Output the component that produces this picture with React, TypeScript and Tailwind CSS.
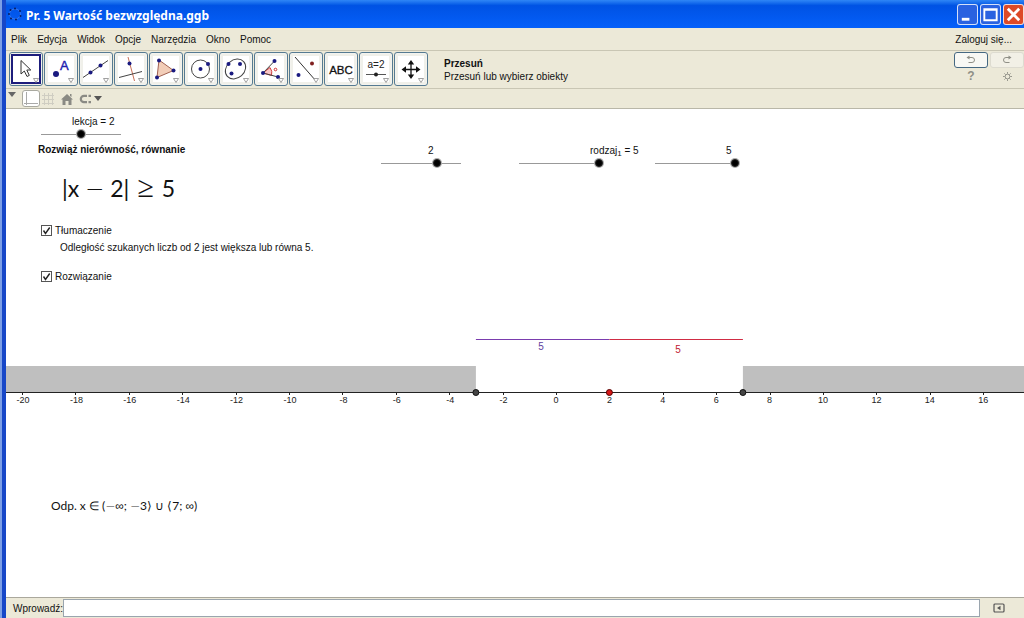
import { useState, type ReactNode } from "react"

interface Tool {
  name: string
  icon: ReactNode
}

interface SliderProps {
  id: string
  label: ReactNode
  min: number
  max: number
  initial: number
  labelClass: string
  className: string
}

interface CheckProps {
  label: string
  checked: boolean
  onChange: (checked: boolean) => void
  className: string
}

const NAVY = "#1a1a80"

const Dot = ({ x, y, fill = NAVY, r = 2 }: { x: number; y: number; fill?: string; r?: number }) => (
  <circle cx={x} cy={y} r={r} fill={fill} />
)

const tools: Tool[] = [
  {
    name: "Przesuń",
    icon: (
      <path
        d="M9 5.5 V19 L12.3 16 L15 21.5 L17.3 20.4 L14.8 15 H18.8 Z"
        fill="#fff"
        stroke="#333"
        strokeWidth="1"
      />
    ),
  },
  {
    name: "Punkt",
    icon: (
      <>
        <Dot x={9} y={19} r={3} />
        <text x="13" y="14.5" fontSize="13" fill="#2020b0" stroke="#2020b0" strokeWidth="0.4">
          A
        </text>
      </>
    ),
  },
  {
    name: "Prosta",
    icon: (
      <>
        <path d="M1 22.5 L26 5.5" stroke="#444" fill="none" />
        <Dot x={8.5} y={17.5} />
        <Dot x={18.5} y={10.5} />
      </>
    ),
  },
  {
    name: "Prosta prostopadła",
    icon: (
      <>
        <path d="M11 2 L17.5 26" stroke="#c87058" fill="none" />
        <path d="M2 22.5 L25 16.5" stroke="#444" fill="none" />
        <Dot x={12.5} y={8.5} />
      </>
    ),
  },
  {
    name: "Wielokąt",
    icon: (
      <>
        <path d="M7 5 L21.5 15.5 L5 22.5 Z" fill="#f2cdb8" stroke="#a06050" />
        <Dot x={7} y={5.5} />
        <Dot x={21.5} y={15.5} />
        <Dot x={5} y={22.5} />
      </>
    ),
  },
  {
    name: "Okrąg",
    icon: (
      <>
        <circle cx="13.5" cy="14" r="9" fill="none" stroke="#444" />
        <Dot x={13.5} y={14} />
        <Dot x={21} y={9} />
      </>
    ),
  },
  {
    name: "Elipsa",
    icon: (
      <>
        <ellipse cx="13.5" cy="14" rx="11" ry="9" transform="rotate(-42 13.5 14)" fill="none" stroke="#444" />
        <Dot x={6.5} y={9} />
        <Dot x={18} y={9} />
        <Dot x={9.5} y={18.5} />
      </>
    ),
  },
  {
    name: "Kąt",
    icon: (
      <>
        <path d="M6 18 L13 12.5 A9 9 0 0 1 14.5 20.5 Z" fill="#f9c6c6" stroke="#d04040" />
        <path d="M17.5 6 L6 18 L21 22" stroke="#444" fill="none" />
        <Dot x={17.5} y={6} />
        <Dot x={6} y={18} />
        <Dot x={21} y={22} />
        <circle cx="18.5" cy="14.5" r="1.3" fill="none" stroke="#d03030" />
      </>
    ),
  },
  {
    name: "Symetria osiowa",
    icon: (
      <>
        <path d="M3 2 L24 26" stroke="#333" fill="none" />
        <Dot x={20} y={8.5} fill="#802020" />
        <Dot x={6.5} y={20} />
      </>
    ),
  },
  {
    name: "Tekst",
    icon: (
      <text x="14" y="18.5" textAnchor="middle" fontSize="11.5" fill="#111" stroke="#111" strokeWidth="0.3">
        ABC
      </text>
    ),
  },
  {
    name: "Suwak",
    icon: (
      <>
        <text x="14" y="13" textAnchor="middle" fontSize="10" fill="#222">
          a=2
        </text>
        <path d="M4 19.5 H24" stroke="#555" />
        <Dot x={14} y={19.5} fill="#222" />
      </>
    ),
  },
  {
    name: "Przesuń obszar",
    icon: (
      <>
        <path d="M14 8 V21 M7.5 14.5 H20.5" stroke="#111" strokeWidth="1.3" />
        <path
          d="M14 5 L17.2 9.5 H10.8 Z M14 24 L17.2 19.5 H10.8 Z M4.5 14.5 L9 11.3 V17.7 Z M23.5 14.5 L19 11.3 V17.7 Z"
          fill="#111"
        />
      </>
    ),
  },
]

const menus = ["Plik", "Edycja", "Widok", "Opcje", "Narzędzia", "Okno", "Pomoc"]

const WindowButton = ({ name, className, children }: { name: string; className: string; children: ReactNode }) => (
  <button
    type="button"
    aria-label={name}
    className={`flex size-[21px] items-center justify-center rounded-[3px] border border-white/80 ${className}`}
  >
    <svg viewBox="0 0 20 20" className="size-full" fill="none" stroke="#fff">
      {children}
    </svg>
  </button>
)

const TitleBar = () => (
  <header className="flex h-7 shrink-0 items-center bg-linear-to-b from-[#2f86f6] via-[#0052e4] via-20% to-[#0560fa] pl-[2px]">
    <svg viewBox="0 0 14 14" className="size-[14px]" fill="#071c60">
      <ellipse cx="7" cy="7" rx="5.5" ry="5" fill="none" stroke="#5d8ff0" strokeWidth="0.6" />
      <circle cx="7" cy="1.5" r="1" />
      <circle cx="12" cy="4" r="1" />
      <circle cx="12.5" cy="9" r="1" />
      <circle cx="8" cy="12.5" r="1" />
      <circle cx="3" cy="11.5" r="1" />
      <circle cx="1" cy="7" r="1" />
      <circle cx="2.5" cy="3" r="1" />
    </svg>
    <h1 className="ml-1 flex-1 pt-1 font-['Noto_Sans',sans-serif] text-[12px] font-bold text-white">
      Pr. 5 Wartość bezwzględna.ggb
    </h1>
    <div className="flex gap-[2px]">
      <WindowButton name="Minimalizuj" className="bg-[#2a62e0]">
        <path d="M4 15 H12" strokeWidth="3" />
      </WindowButton>
      <WindowButton name="Maksymalizuj" className="bg-[#2a62e0]">
        <path d="M3.5 4.5 H16.5 V16 H3.5 Z M3 5 H17" strokeWidth="2" />
      </WindowButton>
      <WindowButton name="Zamknij" className="bg-[#dd4a28]">
        <path d="M4 4 L16 16 M16 4 L4 16" strokeWidth="3" />
      </WindowButton>
    </div>
  </header>
)

const ToolBar = () => {
  const [active, setActive] = useState(0)

  return (
    <div className="flex h-[39px] shrink-0 items-start border-y border-[#c9c6b4] pt-px pl-[3px]">
      <div className="flex gap-px">
        {tools.map((tool, i) => (
          <button
            key={tool.name}
            type="button"
            title={tool.name}
            onClick={() => setActive(i)}
            className="size-[34px] rounded-[3px] border border-[#557a92] bg-[#f3f3ee] p-px"
          >
            <span
              className={`flex size-full items-center justify-center bg-white ${
                i === active ? "border-2 border-[#1d1d7c]" : "border-2 border-[#f0f0ea]"
              }`}
            >
              <svg viewBox="0 0 28 28" className="size-7 shrink-0 font-['Liberation_Sans',sans-serif]">
                {tool.icon}
                <path d="M21.5 23.5 H26.5 L24 27.5 Z" fill="#fff" stroke="#888" strokeWidth="0.8" />
              </svg>
            </span>
          </button>
        ))}
      </div>
      <div className="ml-4 flex-1 self-center leading-[13px]">
        <p className="font-bold">Przesuń</p>
        <p>Przesuń lub wybierz obiekty</p>
      </div>
      <div className="grid grid-cols-2 gap-x-[2px] text-[#8f8f86]">
        <button
          type="button"
          aria-label="Cofnij"
          className="flex h-4 w-[34px] items-center justify-center rounded-[3px] border border-[#456882] bg-[#f8f8f4]"
        >
          <svg viewBox="0 0 10 10" className="size-[10px]" fill="none" stroke="currentColor">
            <path d="M1.5 2.5 H6 A2.5 2.5 0 0 1 6 7.5 H2.5" />
            <path d="M3.5 0.5 L0.5 2.5 L3.5 4.5 Z" fill="currentColor" stroke="none" />
          </svg>
        </button>
        <button
          type="button"
          aria-label="Ponów"
          className="flex h-4 w-[34px] items-center justify-center rounded-[3px] border border-[#dddbd0] bg-[#f2f0e6]"
        >
          <svg viewBox="0 0 10 10" className="size-[10px]" fill="none" stroke="currentColor">
            <path d="M8.5 2.5 H4 A2.5 2.5 0 0 0 4 7.5 H7.5" />
            <path d="M6.5 0.5 L9.5 2.5 L6.5 4.5 Z" fill="currentColor" stroke="none" />
          </svg>
        </button>
        <button type="button" className="h-4 w-[34px] text-[12px] leading-4 font-bold">
          ?
        </button>
        <button type="button" aria-label="Ustawienia" className="flex h-4 w-[34px] items-center justify-center">
          <svg viewBox="0 0 10 10" className="size-[9px]" fill="none" stroke="currentColor">
            <circle cx="5" cy="5" r="2.6" />
            <path d="M5 0 V2 M5 8 V10 M0 5 H2 M8 5 H10 M1.5 1.5 L3 3 M7 7 L8.5 8.5 M8.5 1.5 L7 3 M3 7 L1.5 8.5" />
          </svg>
        </button>
      </div>
    </div>
  )
}

const StyleBar = () => (
  <div className="flex h-5 shrink-0 items-center border-b border-[#b9b7a8] pl-[2px] text-[#8a8a84]">
    <svg viewBox="0 0 8 5" className="mb-2 h-[5px] w-2" fill="#666">
      <path d="M0 0 H8 L4 5 Z" />
    </svg>
    <button
      type="button"
      aria-label="Osie"
      className="ml-[6px] flex h-[17px] w-[18px] items-center justify-center rounded-[3px] border border-[#a9a9a0] bg-white"
    >
      <svg viewBox="0 0 14 14" className="size-[14px]" fill="none" stroke="#aaa">
        <path d="M2.5 0 V13 M0 11.5 H14" />
      </svg>
    </button>
    <button type="button" aria-label="Siatka" className="ml-[2px]">
      <svg viewBox="0 0 12 12" className="size-3" fill="none" stroke="#cfcdc2">
        <path d="M2.5 0 V12 M6.5 0 V12 M10.5 0 V12 M0 2.5 H12 M0 6.5 H12 M0 10.5 H12" />
      </svg>
    </button>
    <button type="button" aria-label="Widok standardowy" className="ml-[7px]">
      <svg viewBox="0 0 12 12" className="size-3" fill="currentColor">
        <path d="M6 1 L12 6.5 H10.5 V12 H7.5 V8 H4.5 V12 H1.5 V6.5 H0 Z M9 1 H10.5 V4 L9 3 Z" />
      </svg>
    </button>
    <button type="button" aria-label="Przyciąganie" className="ml-[6px] flex items-center gap-[2px]">
      <svg viewBox="0 0 13 10" className="h-[10px] w-[13px]" fill="none" stroke="currentColor" strokeWidth="2.2">
        <path d="M8 1.8 H5 A3.2 3.2 0 0 0 5 8.2 H8" />
        <path d="M9.5 1.8 H12 M9.5 8.2 H12" />
      </svg>
      <svg viewBox="0 0 8 5" className="h-[5px] w-2" fill="#555">
        <path d="M0 0 H8 L4 5 Z" />
      </svg>
    </button>
  </div>
)

const Slider = ({ id, label, min, max, initial, labelClass, className }: SliderProps) => {
  const [value, setValue] = useState(initial)

  return (
    <div className={`absolute w-[88px] ${className}`}>
      <label htmlFor={id} className={`block leading-3 whitespace-nowrap ${labelClass}`}>
        {label}
        {value}
      </label>
      <div className="relative flex h-3 items-center">
        <span className="absolute inset-x-1 top-[6px] h-px bg-[#999]" />
        <input
          id={id}
          type="range"
          min={min}
          max={max}
          value={value}
          onChange={(e) => setValue(Number(e.target.value))}
          className="relative h-3 w-full appearance-none bg-transparent [&::-webkit-slider-thumb]:size-2 [&::-webkit-slider-thumb]:appearance-none [&::-webkit-slider-thumb]:rounded-full [&::-webkit-slider-thumb]:border [&::-webkit-slider-thumb]:border-[#222] [&::-webkit-slider-thumb]:bg-black [&::-webkit-slider-thumb]:shadow-[0_0_0_1px_#aaa]"
        />
      </div>
    </div>
  )
}

const Check = ({ label, checked, onChange, className }: CheckProps) => (
  <label className={`absolute flex items-center gap-[3px] leading-[13px] ${className}`}>
    <span className="relative flex size-[11px]">
      <input
        type="checkbox"
        checked={checked}
        onChange={(e) => onChange(e.target.checked)}
        className="peer size-[11px] appearance-none border border-[#555] bg-white"
      />
      <svg
        viewBox="0 0 11 11"
        className="pointer-events-none absolute inset-0 hidden peer-checked:block"
        fill="none"
        stroke="#222"
        strokeWidth="1.4"
      >
        <path d="M2.5 5.5 L4.5 8.5 L8.7 2.5" />
      </svg>
    </span>
    {label}
  </label>
)

// Math signs are wider than the letters around them
const Sign = ({ children }: { children: ReactNode }) => (
  <span className="font-['DejaVu_Sans',sans-serif] font-extralight">{children}</span>
)

// Number line: 0 sits at ORIGIN px, one unit is UNIT px wide
const ORIGIN = 550
const UNIT = 26.7
const AXIS_Y = 283
const toX = (v: number) => ORIGIN + v * UNIT
const ticks = Array.from({ length: 19 }, (_, i) => -20 + i * 2)

const NumberLine = () => (
  <svg className="absolute inset-0 h-full w-full font-['Liberation_Sans',sans-serif]">
    <rect x="0" y={AXIS_Y - 26} width={toX(-3)} height="26" fill="#bfbfbf" />
    <rect x={toX(7)} y={AXIS_Y - 26} width="100%" height="26" fill="#bfbfbf" />
    <rect x={toX(-3)} y="230" width={5 * UNIT} height="1" fill="#7a3cae" />
    <rect x={toX(2)} y="230" width={5 * UNIT} height="1" fill="#d02c44" />
    <text x="535" y="241" textAnchor="middle" fontSize="10" fill="#6040a0">
      5
    </text>
    <text x="672" y="244" textAnchor="middle" fontSize="10" fill="#c02030">
      5
    </text>
    <line x1="0" x2="100%" y1={AXIS_Y + 0.5} y2={AXIS_Y + 0.5} stroke="#222" />
    {ticks.map((v) => (
      <g key={v}>
        <path d={`M${Math.round(toX(v)) + 0.5} ${AXIS_Y} v3`} stroke="#222" />
        <text x={toX(v) + (v < 0 ? 1 : 0)} y={AXIS_Y + 11} textAnchor="middle" fontSize="9" fill="#222">
          {v}
        </text>
      </g>
    ))}
    <circle cx={toX(-3)} cy={AXIS_Y + 0.5} r="3" fill="#444" stroke="#111" />
    <circle cx={toX(7)} cy={AXIS_Y + 0.5} r="3" fill="#444" stroke="#111" />
    <circle cx={toX(2)} cy={AXIS_Y + 0.5} r="3" fill="#d81818" stroke="#500" />
  </svg>
)

const GraphicsView = () => {
  const [explanation, setExplanation] = useState(true)
  const [solution, setSolution] = useState(true)

  return (
    <main className="relative min-h-0 flex-1 overflow-hidden bg-white">
      {solution && <NumberLine />}
      <Slider
        id="lekcja"
        label="lekcja = "
        min={1}
        max={3}
        initial={2}
        labelClass="pl-[35px]"
        className="top-[7px] left-[31px]"
      />
      <Slider id="a" label="" min={-5} max={5} initial={2} labelClass="pl-[51px]" className="top-[36px] left-[371px]" />
      <Slider
        id="rodzaj"
        label={
          <>
            rodzaj<sub className="text-[8px]">1</sub> ={" "}
          </>
        }
        min={1}
        max={5}
        initial={5}
        labelClass="pl-[75px]"
        className="top-[36px] left-[509px]"
      />
      <Slider id="b" label="" min={0} max={5} initial={5} labelClass="pl-[75px]" className="top-[36px] left-[645px]" />
      <h2 className="absolute top-[35px] left-8 leading-3 font-bold">Rozwiąż nierówność, równanie</h2>
      <p className="absolute top-[64px] left-[56px] flex items-baseline gap-2 font-[Lato,sans-serif] text-[23px] leading-7 whitespace-nowrap">
        <span>
          |x <Sign>−</Sign> 2|
        </span>
        <span className="font-['Liberation_Serif',serif] text-[30px]">≥</span>
        <span>5</span>
      </p>
      <Check label="Tłumaczenie" checked={explanation} onChange={setExplanation} className="top-[115px] left-[35px]" />
      {explanation && (
        <p className="absolute top-[133px] left-[54px] leading-3">
          Odległość szukanych liczb od 2 jest większa lub równa 5.
        </p>
      )}
      <Check label="Rozwiązanie" checked={solution} onChange={setSolution} className="top-[161px] left-[35px]" />
      {solution && (
        <p className="absolute top-[389px] left-[45px] font-[Lato,sans-serif] text-[12px] leading-4 whitespace-nowrap">
          Odp. x ∈ (<Sign>−∞</Sign>; <Sign>−</Sign>3⟩ ∪ ⟨7; <Sign>∞</Sign>)
        </p>
      )}
    </main>
  )
}

const InputBar = () => (
  <footer className="flex h-[21px] shrink-0 items-center border-t border-[#aaa89c] pl-[7px]">
    <label htmlFor="command">Wprowadź:</label>
    <input id="command" type="text" className="h-[18px] min-w-0 flex-1 border border-[#9aa5ae] bg-white px-1" />
    <button type="button" aria-label="Pomoc wprowadzania" className="mr-[19px] ml-[13px]">
      <svg viewBox="0 0 12 10" className="h-[10px] w-3" fill="none" stroke="#555" strokeWidth="1.2">
        <rect x="1" y="1" width="10" height="8" rx="1" />
        <path d="M7.5 2.8 V7.2 L4 5 Z" fill="#555" stroke="none" />
      </svg>
    </button>
  </footer>
)

export default function App() {
  return (
    <div className="flex h-screen flex-col overflow-hidden border-l-2 border-[#7d9fe6] bg-[#ece9d8] font-['Liberation_Sans',sans-serif] text-[10px] text-[#111]">
      <div className="flex min-h-0 flex-1 flex-col border-l-4 border-[#1747c8]">
        <TitleBar />
        <nav className="flex h-[22px] shrink-0 items-center gap-[10px] pr-3 pl-[5px]">
          {menus.map((menu) => (
            <button key={menu} type="button">
              {menu}
            </button>
          ))}
          <a href="#login" className="ml-auto">
            Zaloguj się...
          </a>
        </nav>
        <ToolBar />
        <StyleBar />
        <GraphicsView />
        <InputBar />
      </div>
    </div>
  )
}
